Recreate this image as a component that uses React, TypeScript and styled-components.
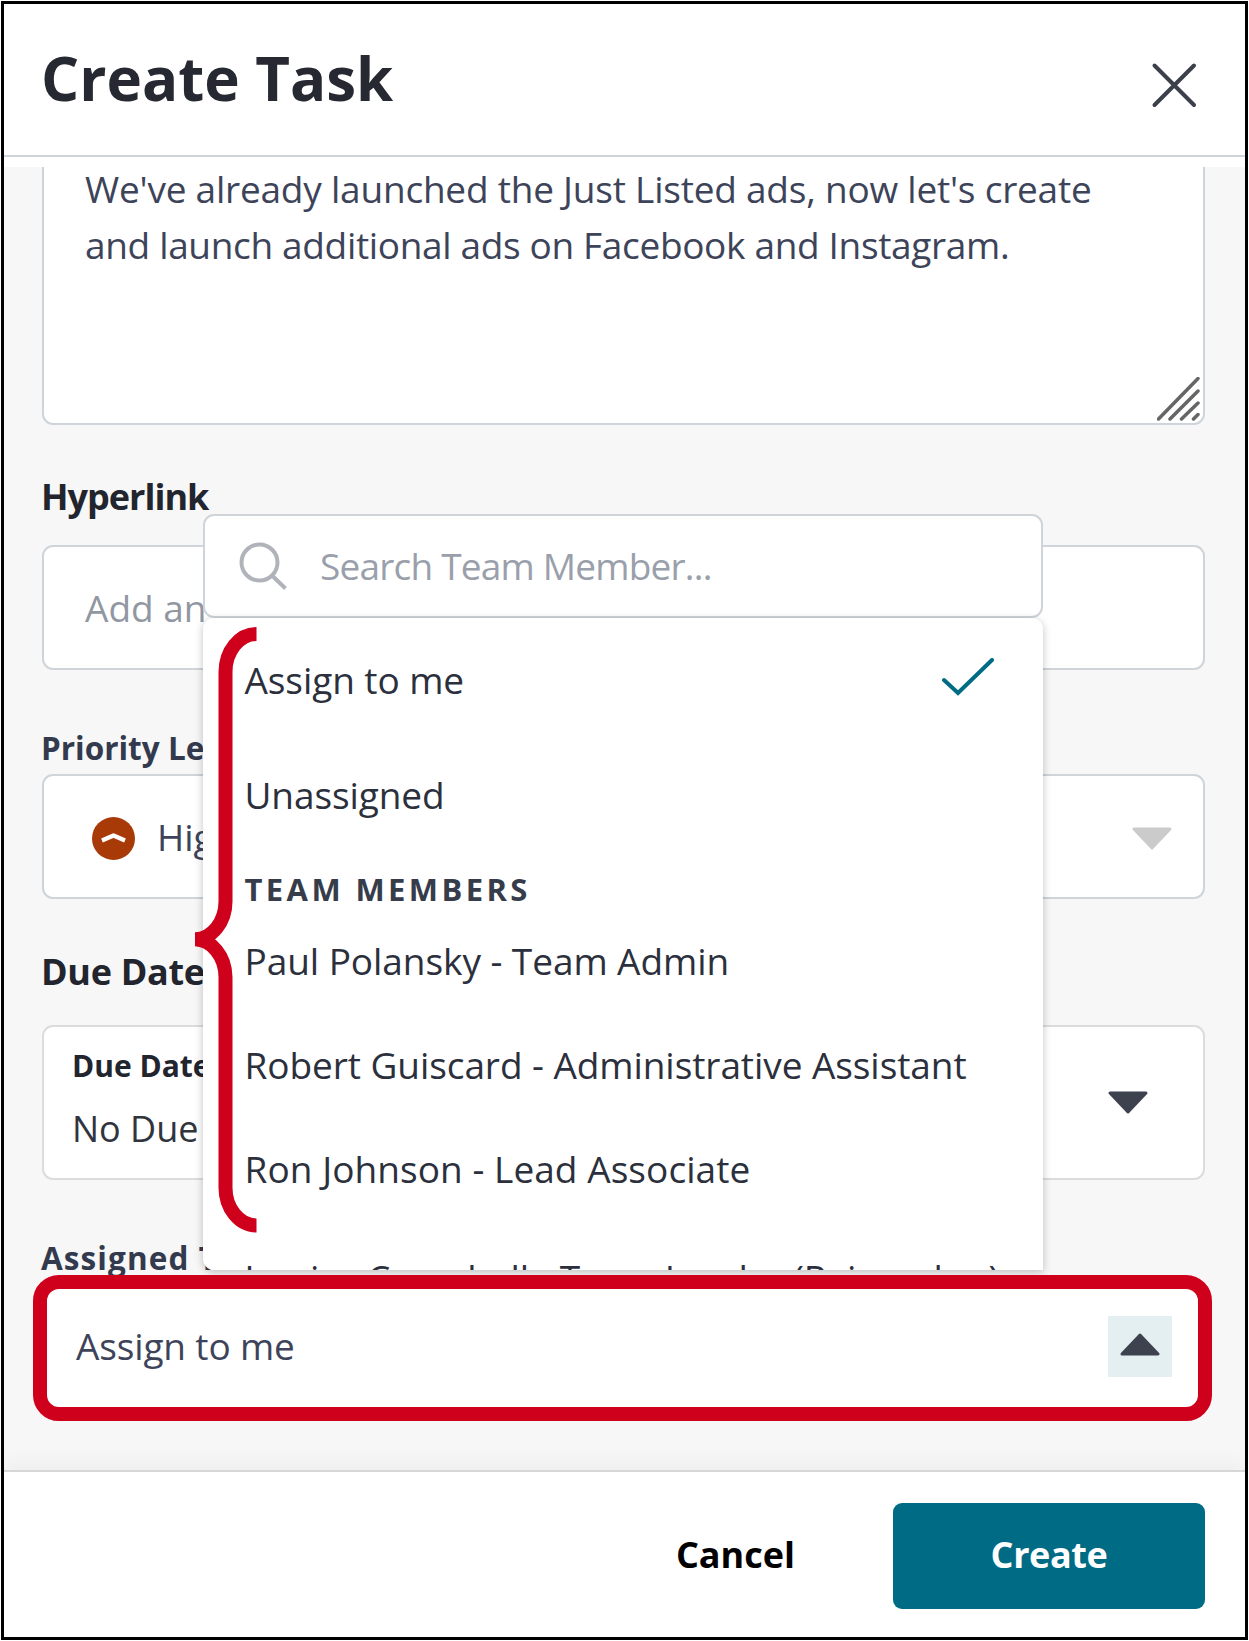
import React from "react";
import styled, { createGlobalStyle } from "styled-components";

const GlobalStyle = createGlobalStyle`
  * { box-sizing: border-box; }
  body { margin: 0; background: #fff; font-family: "Open Sans", "Noto Sans", sans-serif; }
  button, input { font: inherit; }
`;

type Tracked = { $track?: number };
const track = ({ $track = 0 }: Tracked) => `${$track}px`;

const Frame = styled.main`
  display: flex;
  flex-direction: column;
  width: 1247px;
  height: 1639px;
  margin: 1px;
  border: 3px solid #000;
  background: #fff;
  font-size: 37px;
  white-space: nowrap;
`;

const Header = styled.header`
  display: flex;
  justify-content: space-between;
  align-items: flex-start;
  flex: none;
  height: 153px;
  padding: 34px 47px 0 37px;
  border-bottom: 2px solid #ced4d9;
`;

const Title = styled.h1<Tracked>`
  margin: 0;
  font-size: 60px;
  font-weight: 700;
  line-height: 80px;
  letter-spacing: ${track};
  color: #262932;
`;

const CloseButton = styled.button`
  display: flex;
  margin-top: 23px;
  padding: 0;
  border: 0;
  background: none;
`;

const Body = styled.section`
  display: flex;
  flex-direction: column;
  flex: 1;
  min-height: 0;
  margin-top: 10px;
  padding: 0 40px 0 38px;
  overflow: hidden;
  background: #f7f7f7;
`;

const Box = styled.div<{ $height: number; $soft?: boolean }>`
  display: flex;
  align-items: center;
  flex: none;
  height: ${(p) => p.$height}px;
  border: 2px solid ${(p) => (p.$soft ? "#dadcde" : "#ced4d9")};
  border-radius: 11px;
  background: #fff;
`;

const Notes = styled(Box)`
  position: relative;
  flex-direction: column;
  align-items: flex-start;
  margin-top: -60px;
  padding: 52px 41px 0;
  color: #3d4459;
`;

const NoteLine = styled.span<Tracked>`
  line-height: 55.5px;
  letter-spacing: ${track};
`;

const Grip = styled.svg`
  position: absolute;
  right: 3px;
  bottom: 2px;
`;

const Label = styled.label<Tracked & { $small?: boolean; $top: number; $gap: number }>`
  flex: none;
  margin: ${(p) => p.$top}px 0 ${(p) => p.$gap}px -1px;
  font-size: ${(p) => (p.$small ? 31.5 : 36)}px;
  font-weight: 700;
  line-height: ${(p) => (p.$small ? 40 : 48)}px;
  letter-spacing: ${track};
  color: ${(p) => (p.$small ? "#333a4d" : "#22252e")};
`;

const LinkBox = styled(Box)`
  padding: 0 41px 1px;
  color: #9197a1;
`;

const PriorityBox = styled(Box)`
  gap: 22px;
  padding: 3px 31px 0 48px;
  color: #3d4459;
`;

const PriorityName = styled.span`
  flex: 1;
  padding-bottom: 3px;
`;

const DateBox = styled(Box)`
  justify-content: space-between;
  padding: 0 55px 0 28px;
`;

const DateStack = styled.div`
  display: flex;
  flex-direction: column;
  padding-bottom: 9px;
`;

const DateCaption = styled.strong<Tracked>`
  font-size: 30px;
  font-weight: 700;
  line-height: 60px;
  letter-spacing: ${track};
  color: #22252e;
`;

const DateValue = styled.span`
  font-size: 36px;
  line-height: 65px;
  color: #30343d;
`;

const Assignee = styled.div`
  position: relative;
  flex: none;
`;

const AssigneeBox = styled(Box)`
  justify-content: space-between;
  padding: 0 31px 0 32px;
  color: #3d4459;
`;

const AssigneeName = styled.span<Tracked>`
  padding-bottom: 2px;
  letter-spacing: ${track};
`;

const Toggle = styled.button`
  display: flex;
  justify-content: center;
  width: 64px;
  height: 61px;
  padding: 17px 0 0;
  border: 0;
  background: #e3eff1;
`;

const Highlight = styled.div`
  position: absolute;
  z-index: 3;
  inset: -9px -7px -12px -9px;
  border: 14px solid #ce001c;
  border-radius: 26px;
  pointer-events: none;
`;

const Dropdown = styled.div`
  position: absolute;
  z-index: 2;
  left: 161px;
  bottom: calc(100% + 14px);
  display: flex;
  flex-direction: column;
  width: 840px;
`;

const SearchBox = styled.div`
  display: flex;
  align-items: center;
  gap: 32px;
  height: 104px;
  padding-left: 34px;
  border: 2px solid #ced4d9;
  border-radius: 11px;
  background: #fff;
  color: #9aa0ab;
`;

const Options = styled.ul`
  display: flex;
  flex-direction: column;
  height: 652px;
  margin: 0;
  padding: 4px 49px 0 41.5px;
  overflow: hidden;
  border-radius: 11px 11px 0 11px;
  background: #fff;
  box-shadow: 0 2px 9px rgba(0, 0, 0, 0.24);
  list-style: none;
`;

const Option = styled.li<Tracked & { $height: number }>`
  display: flex;
  align-items: center;
  justify-content: space-between;
  flex: none;
  height: ${(p) => p.$height}px;
  letter-spacing: ${track};
  color: #2b303c;
`;

const GroupTitle = styled.li<Tracked>`
  flex: none;
  height: 57px;
  padding-top: 17px;
  font-size: 31px;
  font-weight: 700;
  line-height: 41px;
  letter-spacing: ${track};
  color: #363c4a;
`;

const Tick = styled.svg`
  margin-bottom: 5px;
`;

const Brace = styled.svg`
  position: absolute;
  left: -8px;
  top: 113px;
`;

const Footer = styled.footer`
  position: relative;
  display: flex;
  align-items: center;
  justify-content: flex-end;
  gap: 98px;
  flex: none;
  height: 167px;
  padding: 2px 40px 0 0;
  border-top: 2px solid #d6d7d9;
  background: #fff;
  box-shadow: 0 -4px 24px rgba(0, 0, 0, 0.05);
  clip-path: inset(-40px 0 0 0);
`;

const CancelButton = styled.button<Tracked>`
  padding: 0 0 3px;
  border: 0;
  background: none;
  font-size: 36px;
  font-weight: 700;
  letter-spacing: ${track};
  color: #000;
`;

const CreateButton = styled(CancelButton)`
  width: 312px;
  height: 106px;
  border-radius: 9px;
  background: #006b84;
  color: #fff;
`;

const Arrow = ({ color, up }: { color: string; up?: boolean }) => (
  <svg width="40" height="23" viewBox="0 0 40 23">
    <path
      d={up ? "M20 2 L38 21 H2 Z" : "M20 21 L2 2 H38 Z"}
      fill={color}
      stroke={color}
      strokeWidth="3"
      strokeLinejoin="round"
    />
  </svg>
);

const members = [
  { text: "Paul Polansky - Team Admin", track: -0.06, height: 104 },
  { text: "Robert Guiscard - Administrative Assistant", track: -0.07, height: 103.5 },
  { text: "Ron Johnson - Lead Associate", track: 0.06, height: 105.5 },
  { text: "Jessica Campbell - Team Leader (Rainmaker)", track: -0.1, height: 111 },
];

export default function App() {
  return (
    <>
      <GlobalStyle />
      <Frame>
        <Header>
          <Title>Create Task</Title>
          <CloseButton aria-label="Close">
            <svg width="48" height="48" viewBox="0 0 48 48" fill="none" stroke="#3b404b" strokeWidth="4" strokeLinecap="round">
              <path d="M4.5 4.5 L44 44 M44 4.5 L4.5 44" />
            </svg>
          </CloseButton>
        </Header>
        <Body>
          <Notes $height={318}>
            <NoteLine $track={-0.22}>We've already launched the Just Listed ads, now let's create</NoteLine>
            <NoteLine $track={-0.34}>and launch additional ads on Facebook and Instagram.</NoteLine>
            <Grip width="43" height="44" viewBox="0 0 43 44" stroke="#666" strokeWidth="3.500" strokeLinecap="round">
              <path d="M1.5 42 L41 1.5 M13 42 L41 14 M24.500 42 L41 26 M36.500 42 L41 37.500" />
            </Grip>
          </Notes>

          <Label $top={48} $gap={24} $track={-1}>Hyperlink</Label>
          <LinkBox $height={125}>Add an external link</LinkBox>

          <Label $small $top={58} $gap={6} $track={0}>Priority Level</Label>
          <PriorityBox $height={125}>
            <svg width="43" height="43" viewBox="0 0 43 43">
              <circle cx="21.500" cy="21.500" r="21.500" fill="#a83a07" />
              <path d="M10 23.500 L21.500 18.500 L33 23.500" fill="none" stroke="#fff" strokeWidth="4.500" strokeLinejoin="round" />
            </svg>
            <PriorityName>High</PriorityName>
            <Arrow color="#cbcbcb" />
          </PriorityBox>

          <Label $top={49} $gap={29} $track={-0.3}>Due Date</Label>
          <DateBox $height={155} $soft>
            <DateStack>
              <DateCaption>Due Date</DateCaption>
              <DateValue>No Due Date</DateValue>
            </DateStack>
            <Arrow color="#3d424e" />
          </DateBox>

          <Label $small $top={58} $gap={6} $track={1.1}>Assigned To</Label>
          <Assignee>
            <AssigneeBox $height={125}>
              <AssigneeName $track={-0.15}>Assign to me</AssigneeName>
              <Toggle aria-label="Close list">
                <Arrow color="#3d424e" up />
              </Toggle>
            </AssigneeBox>
            <Dropdown>
              <SearchBox>
                <svg width="49" height="49" viewBox="0 0 49 49" fill="none" stroke="#b0b4ba" strokeWidth="4">
                  <circle cx="20.500" cy="20.500" r="18" />
                  <path d="M33 33.500 L46.500 46.500" />
                </svg>
                <NoteLine $track={-0.8}>Search Team Member...</NoteLine>
              </SearchBox>
              <Options>
                <Option $height={115} $track={-0.08}>
                  Assign to me
                  <Tick width="52" height="38" viewBox="0 0 52 38" fill="none" stroke="#006b84" strokeWidth="4" strokeLinecap="round">
                    <path d="M2 22 L16 35 L50 2" />
                  </Tick>
                </Option>
                <Option $height={114.5} $track={-0.1}>Unassigned</Option>
                <GroupTitle $track={3.4}>TEAM MEMBERS</GroupTitle>
                {members.map((m) => (
                  <Option key={m.text} $track={m.track} $height={m.height}>{m.text}</Option>
                ))}
              </Options>
              <Brace width="64" height="606" viewBox="0 0 64 606" fill="none" stroke="#ce001c" strokeWidth="14">
                <path d="M61.500 7 A31 38 0 0 0 30.500 45 V274 A31 38 0 0 1 0 312.300 A31 38 0 0 1 30.500 350 V560 A31 38 0 0 0 61.500 598.500" />
              </Brace>
            </Dropdown>
            <Highlight />
          </Assignee>
        </Body>
        <Footer>
          <CancelButton>Cancel</CancelButton>
          <CreateButton $track={-0.4}>Create</CreateButton>
        </Footer>
      </Frame>
    </>
  );
}
